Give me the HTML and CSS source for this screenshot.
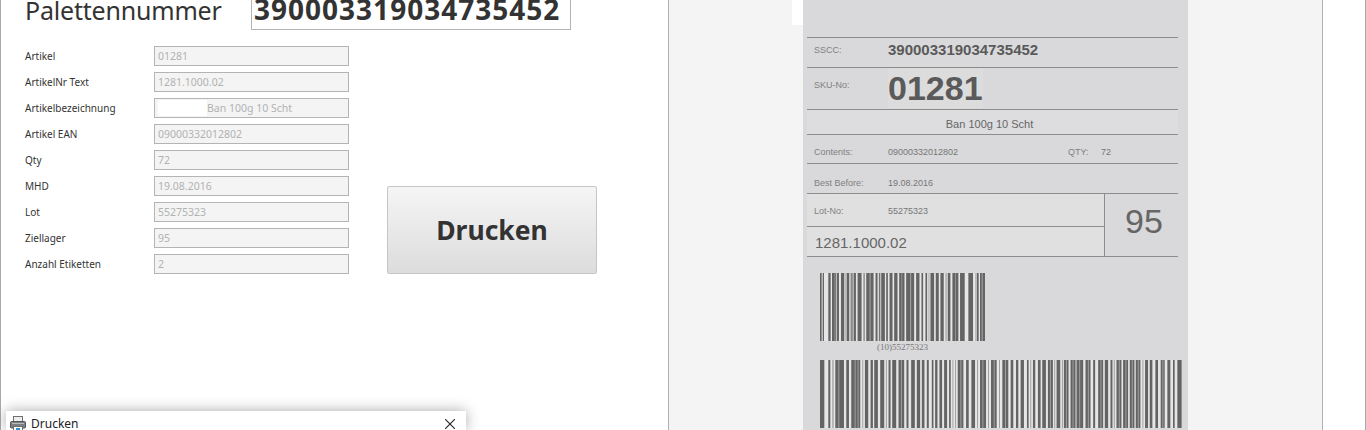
FILE: index.html
```html
<!DOCTYPE html>
<html lang="de">
<head>
  <meta charset="UTF-8">
  <meta name="viewport" content="width=device-width, initial-scale=1.0">
  <title>Palettennummer - Drucken</title>
  <link rel="stylesheet" href="styles.css">
</head>
<body>
  <div class="window">
    <div class="left-panel">
      <div class="title-row">
        <div class="title">Palettennummer</div>
        <div class="sscc-input">390003319034735452</div>
      </div>
      <div class="form-area">
        <div class="form">
          <div class="form-row"><label>Artikel</label><div class="field">01281</div></div>
          <div class="form-row"><label>ArtikelNr Text</label><div class="field">1281.1000.02</div></div>
          <div class="form-row"><label>Artikelbezeichnung</label><div class="field"><span class="blank"></span>Ban 100g 10 Scht</div></div>
          <div class="form-row"><label>Artikel EAN</label><div class="field">09000332012802</div></div>
          <div class="form-row"><label>Qty</label><div class="field">72</div></div>
          <div class="form-row"><label>MHD</label><div class="field">19.08.2016</div></div>
          <div class="form-row"><label>Lot</label><div class="field">55275323</div></div>
          <div class="form-row"><label>Ziellager</label><div class="field">95</div></div>
          <div class="form-row"><label>Anzahl Etiketten</label><div class="field">2</div></div>
        </div>
        <button class="print-btn">Drucken</button>
      </div>
    </div>

    <div class="preview">
      <div class="preview-patch"></div>
      <div class="label">
        <div class="label-row row-sscc">
          <span class="cap">SSCC:</span><span class="sscc-val">390003319034735452</span>
        </div>
        <div class="label-row row-sku">
          <span class="cap">SKU-No:</span><span class="sku-val">01281</span>
        </div>
        <div class="label-row row-desc">Ban 100g 10 Scht</div>
        <div class="label-row row-contents">
          <span class="cap">Contents:</span><span class="small-val ean">09000332012802</span>
          <span class="cap qty-cap">QTY:</span><span class="small-val">72</span>
        </div>
        <div class="label-row row-best">
          <span class="cap">Best Before:</span><span class="small-val">19.08.2016</span>
        </div>
        <div class="lot-block">
          <div class="lot-left">
            <div class="lot-no"><span class="cap">Lot-No:</span><span class="small-val">55275323</span></div>
            <div class="lot-text">1281.1000.02</div>
          </div>
          <div class="lot-store">95</div>
        </div>
        <div class="barcodes">
          <svg class="barcode-lot" viewBox="59 0 496 10" preserveAspectRatio="none">
            <path fill="#646464" d="M59 0h5v10h-5zM67 0h4v10h-4zM84 0h7v10h-7zM95 0h13v10h-13zM110 0h6v10h-6zM122 0h10v10h-10zM139 0h8v10h-8zM153 0h4v10h-4zM160 0h7v10h-7zM172 0h12v10h-12zM190 0h3v10h-3zM198 0h22v10h-22zM226 0h6v10h-6zM236 0h3v10h-3zM243 0h11v10h-11zM258 0h5v10h-5zM268 0h9v10h-9zM282 0h10v10h-10zM297 0h16v10h-16zM318 0h24v10h-24zM348 0h10v10h-10zM364 0h5v10h-5zM376 0h5v10h-5zM391 0h11v10h-11zM407 0h9v10h-9zM421 0h10v10h-10zM443 0h8v10h-8zM457 0h18v10h-18zM480 0h14v10h-14zM505 0h14v10h-14zM530 0h6v10h-6zM540 0h15v10h-15z"/>
            <path fill="#a8a8a8" d="M103 0h2v10h-2zM135 0h2v10h-2zM150 0h2v10h-2zM208 0h3v10h-3zM240 0h2v10h-2zM304 0h2v10h-2zM330 0h3v10h-3zM385 0h3v10h-3zM436 0h4v10h-4zM465 0h2v10h-2zM526 0h2v10h-2zM545 0h3v10h-3z"/>
          </svg>
          <div class="barcode-text">(10)55275323</div>
          <svg class="barcode-sscc" viewBox="59 0 1088 10" preserveAspectRatio="none">
            <path fill="#646464" d="M59 0h13v10h-13zM84 0h6v10h-6zM105 0h26v10h-26zM138 0h8v10h-8zM153 0h27v10h-27zM194 0h10v10h-10zM211 0h7v10h-7zM222 0h11v10h-11zM240 0h12v10h-12zM265 0h6v10h-6zM276 0h12v10h-12zM295 0h17v10h-17zM319 0h6v10h-6zM333 0h11v10h-11zM350 0h10v10h-10zM365 0h8v10h-8zM380 0h6v10h-6zM395 0h5v10h-5zM405 0h7v10h-7zM418 0h8v10h-8zM432 0h9v10h-9zM447 0h5v10h-5zM473 0h17v10h-17zM498 0h8v10h-8zM514 0h11v10h-11zM540 0h18v10h-18zM573 0h17v10h-17zM607 0h18v10h-18zM632 0h8v10h-8zM648 0h7v10h-7zM662 0h10v10h-10zM681 0h5v10h-5zM699 0h7v10h-7zM714 0h8v10h-8zM727 0h11v10h-11zM744 0h15v10h-15zM770 0h11v10h-11zM792 0h14v10h-14zM812 0h15v10h-15zM830 0h20v10h-20zM857 0h15v10h-15zM880 0h6v10h-6zM895 0h15v10h-15zM915 0h10v10h-10zM932 0h6v10h-6zM950 0h15v10h-15zM970 0h15v10h-15zM990 0h14v10h-14zM1008 0h14v10h-14zM1036 0h9v10h-9zM1050 0h8v10h-8zM1067 0h8v10h-8zM1083 0h12v10h-12zM1103 0h9v10h-9zM1120 0h5v10h-5zM1133 0h13v10h-13z"/>
            <path fill="#a0a0a0" d="M96 0h4v10h-4zM114 0h3v10h-3zM163 0h3v10h-3zM172 0h3v10h-3zM186 0h3v10h-3zM257 0h3v10h-3zM302 0h3v10h-3zM457 0h3v10h-3zM465 0h3v10h-3zM481 0h3v10h-3zM531 0h3v10h-3zM547 0h3v10h-3zM564 0h3v10h-3zM581 0h3v10h-3zM597 0h3v10h-3zM615 0h3v10h-3zM691 0h3v10h-3zM750 0h3v10h-3zM763 0h3v10h-3zM786 0h3v10h-3zM798 0h3v10h-3zM818 0h3v10h-3zM838 0h3v10h-3zM864 0h3v10h-3zM902 0h3v10h-3zM942 0h3v10h-3zM957 0h3v10h-3zM977 0h3v10h-3zM996 0h3v10h-3zM1014 0h3v10h-3zM1028 0h3v10h-3zM1088 0h3v10h-3z"/>
          </svg>
        </div>
      </div>
    </div>
    <div class="right-gap"></div>
  </div>

  <div class="dialog">
    <div class="dialog-head">
      <svg class="printer" width="16" height="16" viewBox="0 0 16 16">
        <rect x="3.5" y="0.5" width="9" height="5" fill="#eeeeee" stroke="#6f6f6f"/>
        <rect x="0.5" y="5.5" width="15" height="6.5" rx="1" fill="#7b7e83" stroke="#55575b"/>
        <rect x="2" y="7" width="12" height="1" fill="#b9bbbe"/>
        <rect x="3.5" y="10.5" width="9" height="5.5" fill="#ffffff" stroke="#6f6f6f"/>
        <rect x="6" y="12" width="4" height="4" fill="#2f8fd0"/>
      </svg>
      <span class="dialog-title">Drucken</span>
      <svg class="dialog-close" width="10" height="10" viewBox="0 0 10 10">
        <path d="M0 0L10 10M10 0L0 10" stroke="#222" stroke-width="1.1" fill="none"/>
      </svg>
    </div>
  </div>
</body>
</html>
```

FILE: styles.css
```css
* { margin: 0; padding: 0; box-sizing: border-box; }
html, body {
  height: 430px;
  overflow: hidden;
}
body {
  font-family: "Noto Sans", sans-serif;
  background-color: #ffffff;
  color: #333;
  position: relative;
}
.window {
  display: flex;
  height: 430px;
  border-left: 1px solid #a9a9a9;
  border-right: 1px solid #a9a9a9;
}

/* left side */
.left-panel {
  width: 667px;
  flex: none;
  padding-left: 24px;
}
.title-row {
  display: flex;
  height: 30px;
  overflow: hidden;
}
.title {
  width: 226px;
  font-size: 25px;
  line-height: 20px;
  letter-spacing: -0.2px;
  color: #333;
}
.sscc-input {
  width: 320px;
  height: 30px;
  border: 1px solid #b4b4b4;
  border-top: none;
  padding-left: 2px;
  font-size: 28px;
  font-weight: bold;
  letter-spacing: 1px;
  line-height: 19px;
  color: #333;
  white-space: nowrap;
}
.form-area {
  display: flex;
  align-items: flex-end;
  gap: 38px;
  margin-top: 16px;
}
.form {
  display: flex;
  flex-direction: column;
  gap: 6px;
}
.form-row {
  display: flex;
  align-items: center;
  height: 20px;
}
.form-row label {
  width: 129px;
  font-size: 10px;
  color: #333;
}
.field {
  display: flex;
  align-items: center;
  width: 195px;
  height: 20px;
  padding-left: 3px;
  background-color: #f4f4f4;
  border: 1px solid #b4b4b4;
  font-size: 10.5px;
  color: #b2b2b2;
}
.blank {
  width: 49px;
  height: 16px;
  background-color: #ffffff;
}
.print-btn {
  width: 210px;
  height: 88px;
  background: linear-gradient(#f5f5f5 0%, #dcdcdc 100%);
  border: 1px solid #c6c6c6;
  border-radius: 2px;
  font-family: "Noto Sans", sans-serif;
  font-size: 26.5px;
  font-weight: bold;
  color: #333;
}

/* print preview */
.preview {
  position: relative;
  width: 655px;
  flex: none;
  background-color: #f4f4f4;
  border-left: 1px solid #b0b0b0;
  border-right: 1px solid #b0b0b0;
  padding-left: 134px;
  overflow: hidden;
}
.preview-patch {
  position: absolute;
  left: 123px;
  top: 0;
  width: 11px;
  height: 25px;
  background-color: #ffffff;
}
.right-gap {
  flex: 1;
}
.label {
  width: 385px;
  height: 430px;
  padding: 37px 10px 0 4px;
  background-color: #d9d9db;
  font-family: "Liberation Sans", sans-serif;
  color: #666;
}
.label-row {
  display: flex;
  align-items: center;
  padding-left: 7px;
  border-top: 1px solid #8d8d8d;
}
.cap {
  width: 74px;
  flex: none;
  font-size: 9px;
  color: #808080;
}
.small-val {
  font-size: 9px;
  color: #767676;
}
.row-sscc { height: 30px; padding-bottom: 6px; }
.sscc-val {
  font-size: 15px;
  font-weight: bold;
  color: #5a5a5a;
}
.row-sku { height: 42px; padding-bottom: 2px; }
.row-sku .cap { margin-bottom: 6px; }
.sku-val {
  font-size: 34px;
  font-weight: bold;
  line-height: 40px;
  color: #5a5a5a;
  background-color: #dcdcdd;
}
.row-desc {
  height: 25px;
  justify-content: center;
  padding-top: 3px;
  padding-right: 13px;
  font-size: 11px;
  background-color: #dddddf;
}
.row-contents { height: 29px; padding-top: 5px; }
.ean { width: 180px; flex: none; }
.qty-cap { width: 33px; }
.row-best { height: 30px; padding-top: 9px; }
.lot-block {
  display: flex;
  height: 64px;
  border-top: 1px solid #8d8d8d;
  border-bottom: 1px solid #8d8d8d;
}
.lot-left {
  width: 298px;
  flex: none;
  background-color: #e0e0e1;
  border-right: 1px solid #8d8d8d;
}
.lot-no {
  display: flex;
  align-items: center;
  height: 33px;
  padding-left: 7px;
  padding-top: 2px;
  border-bottom: 1px solid #8d8d8d;
}
.lot-text {
  height: 29px;
  padding-left: 8px;
  font-size: 15px;
  line-height: 32px;
}
.lot-store {
  flex: 1;
  text-align: center;
  font-size: 34px;
  line-height: 54px;
  padding-left: 5px;
}
.barcodes {
  padding-left: 13px;
  padding-top: 16px;
}
.barcode-lot {
  display: block;
  width: 165px;
  height: 68px;
  background-color: #e6e6e7;
}
.barcode-text {
  width: 165px;
  height: 19px;
  font-family: "Liberation Serif", serif;
  font-size: 9px;
  line-height: 12px;
  text-align: center;
  color: #777;
}
.barcode-sscc {
  display: block;
  width: 362px;
  height: 68px;
  background-color: #e6e6e7;
}

/* dialog on top */
.dialog {
  position: absolute;
  left: 6px;
  top: 411px;
  width: 460px;
  height: 19px;
  overflow: hidden;
  background-color: #ffffff;
  box-shadow: 0 0 14px rgba(0, 0, 0, 0.35);
}
.dialog-head {
  display: flex;
  align-items: center;
  height: 26px;
  padding-left: 4px;
  padding-right: 11px;
}
.dialog-title {
  margin-left: 5px;
  font-size: 12px;
  line-height: 12px;
  color: #222;
}
.dialog-close {
  margin-left: auto;
}
```
